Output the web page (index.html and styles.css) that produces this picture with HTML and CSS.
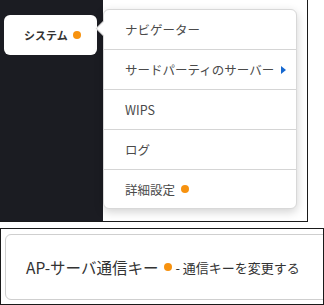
FILE: index.html
```html
<!DOCTYPE html>
<html lang="ja">
  <head>
    <meta charset="UTF-8" />
    <title>システム</title>
    <link rel="stylesheet" href="styles.css">
  </head>
  <body>
    <!-- サイドバーとメニュー -->
    <div class="shot">
      <div class="sidebar">
        <div class="tab">
          <span>システム</span>
          <i class="dot"></i>
        </div>
      </div>
      <div class="pane">
        <ul class="menu">
          <li>ナビゲーター</li>
          <li class="has-sub">
            <span>サードパーティのサーバー</span>
            <i class="caret"></i>
          </li>
          <li>WIPS</li>
          <li>ログ</li>
          <li>
            <span>詳細設定</span>
            <i class="dot"></i>
          </li>
        </ul>
      </div>
    </div>

    <!-- 通信キー -->
    <div class="panel">
      <div class="box">
        <span class="title">AP-サーバ通信キー</span>
        <i class="dot"></i>
        <span class="desc">- 通信キーを変更する</span>
      </div>
    </div>
  </body>
</html>
```

FILE: styles.css
```css
body {
  margin: 0;
  font-family: "Noto Sans CJK JP", "Noto Sans", sans-serif;
  background: #fff;
  color: #444;
}

.shot {
  display: flex;
  width: 307px;
  height: 221px;
  border: 1px solid #1a1a1a;
  border-top: 0;
  border-left: 0;
}

.sidebar {
  width: 103px;
  background-color: #1b1c22;
  padding: 15px 0 0 4px;
  box-sizing: border-box;
}

.tab {
  display: flex;
  align-items: center;
  gap: 5px;
  width: 93px;
  height: 40px;
  box-sizing: border-box;
  padding-left: 20px;
  background: #fff;
  border-radius: 6px;
  font-size: 11px;
  font-weight: bold;
  color: #333;
}

.dot {
  display: inline-block;
  width: 8px;
  height: 8px;
  border-radius: 50%;
  background: #f7920f;
}

.pane {
  flex: 1;
  padding-top: 9px;
}

.menu {
  position: relative;
  list-style: none;
  margin: 0;
  padding: 0;
  width: 192px;
  background: #fff;
  border: 1px solid #d8d8d8;
  border-radius: 6px;
  box-shadow: 0 3px 10px rgba(0, 0, 0, 0.18);
}

.menu::before {
  content: "";
  position: absolute;
  left: -6px;
  top: 13px;
  width: 10px;
  height: 10px;
  background: #fff;
  border-left: 1px solid #d8d8d8;
  border-bottom: 1px solid #d8d8d8;
  transform: rotate(45deg);
}

.menu li {
  display: flex;
  align-items: center;
  gap: 6px;
  height: 39px;
  padding-left: 21px;
  font-size: 12.5px;
  color: #4a4a4a;
  border-bottom: 1px solid #d5d5d5;
}

.menu li:last-child {
  border-bottom: 0;
  height: 38px;
}

.caret {
  width: 0;
  height: 0;
  margin-left: 1px;
  border-top: 4px solid transparent;
  border-bottom: 4px solid transparent;
  border-left: 5px solid #1668d0;
}

.panel {
  margin-top: 6px;
  height: 77px;
  border: 1px solid #1a1a1a;
  overflow: hidden;
  padding: 5px 0 0 4px;
  box-sizing: border-box;
}

.box {
  display: flex;
  align-items: center;
  gap: 6px;
  width: 340px;
  height: 66px;
  box-sizing: border-box;
  padding-left: 20px;
  border: 1px solid #cfcfcf;
  border-radius: 6px;
  color: #333;
}

.title {
  font-size: 15.5px;
}

.desc {
  font-size: 13px;
  margin-left: -3px;
}
```
